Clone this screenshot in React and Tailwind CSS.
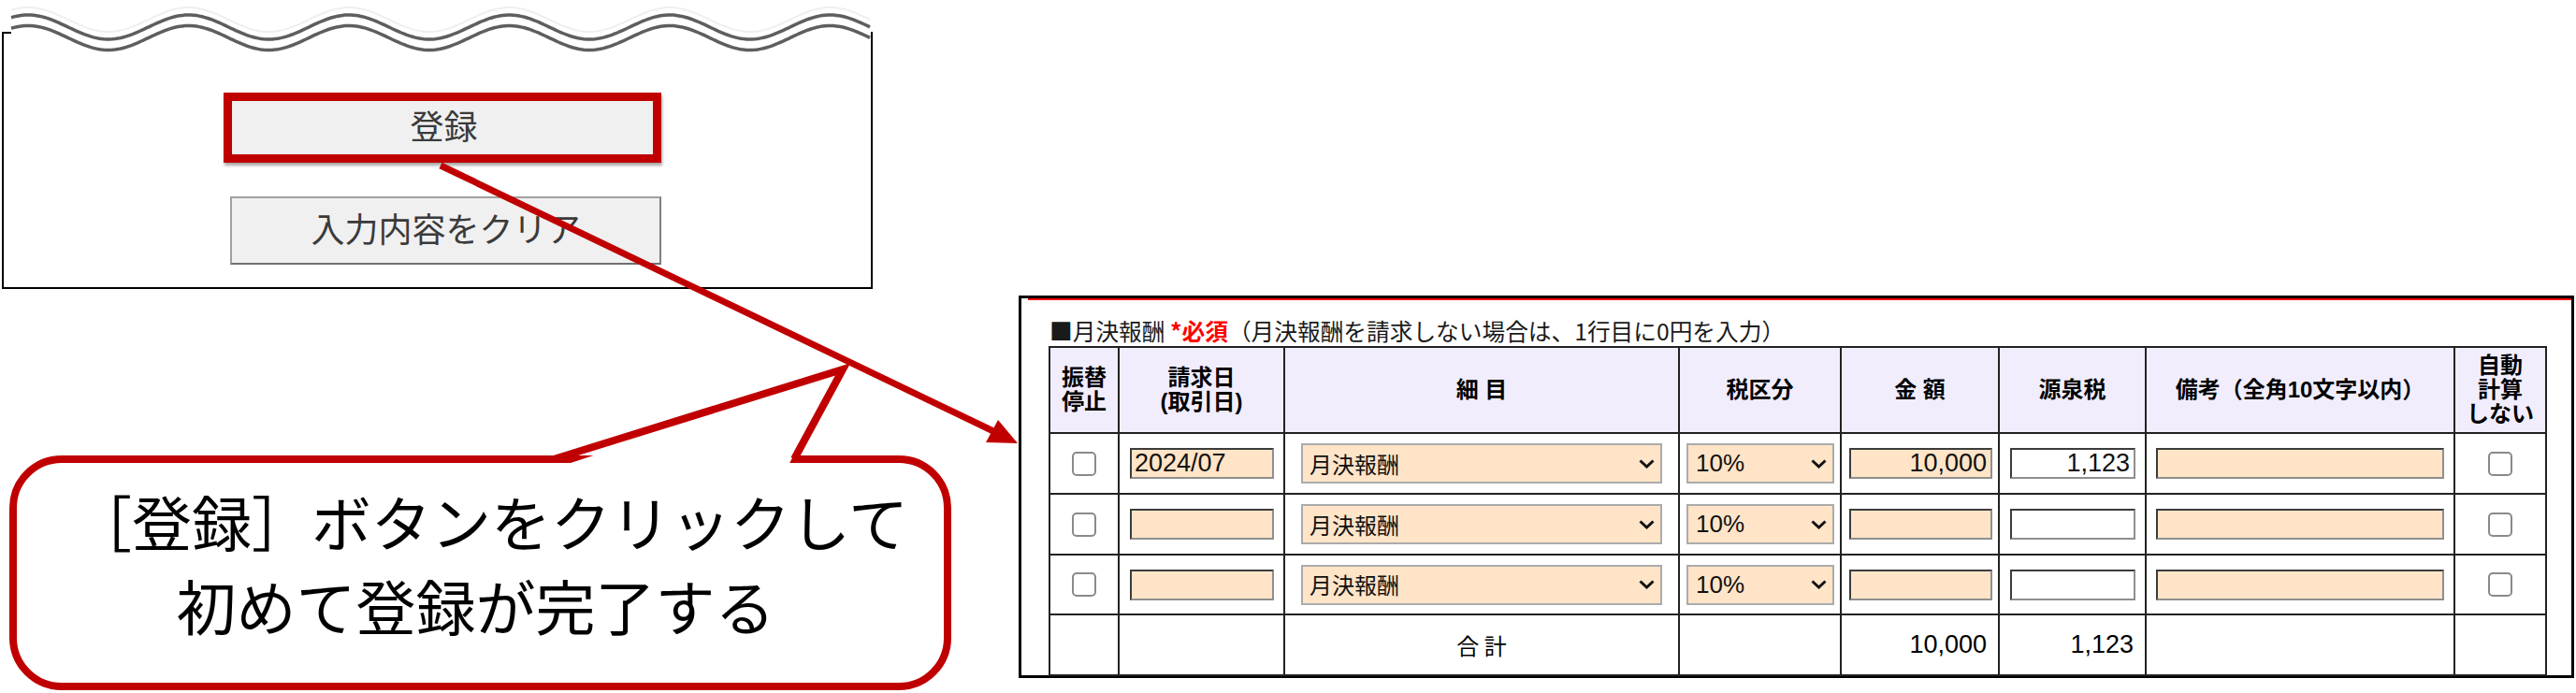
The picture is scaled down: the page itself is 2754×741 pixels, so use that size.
import React from 'react';

const rows = [
    { date: '2024/07', amount: '10,000', tax: '1,123' },
    { date: '', amount: '', tax: '' },
    { date: '', amount: '', tax: '' },
];

function wavePath(offset) {
    let d = '';
    for (let x = 12; x <= 930; x += 3) {
        const y = 29 + offset - 13 * Math.cos((2 * Math.PI * (x - 30)) / 171.5);
        d += (x === 12 ? 'M' : 'L') + x + ' ' + y.toFixed(1) + ' ';
    }
    return d;
}

function Chevron() {
    return (
        <svg width="17" height="10" viewBox="0 0 17 10" className="absolute right-[8px] top-1/2 -translate-y-1/2 pointer-events-none">
            <path d="M1.5 1.5 L8.5 8 L15.5 1.5" fill="none" stroke="#111" strokeWidth="3" />
        </svg>
    );
}

function Check() {
    return (
        <input
            type="checkbox"
            readOnly
            className="appearance-none block mx-auto w-[26px] h-[26px] rounded-[5px] border-2 border-[#8a8a8a] bg-white"
        />
    );
}

function Field({ value, peach = true, right = false, width }) {
    return (
        <input
            readOnly
            value={value}
            style={{ width }}
            className={
                'block h-[33px] border-2 border-t-[#3c3c3c] border-l-[#3c3c3c] border-r-[#8f8f8f] border-b-[#8f8f8f] text-[27px] leading-none text-[#111] outline-none ' +
                (peach ? 'bg-[#ffe4c8] ' : 'bg-white ') +
                (right ? 'text-right pr-[4px]' : 'text-left pl-[3px]')
            }
        />
    );
}

export default function App() {
    return (
        <div className="relative w-[2754px] h-[741px] overflow-hidden bg-white flex font-['Liberation_Sans','Noto_Sans_CJK_JP',sans-serif] text-black">
            {/* left: app screen fragment + callout */}
            <div className="w-[1089px] shrink-0 flex flex-col">
                <div className="mt-[34px] ml-[2px] w-[931px] h-[275px] border-2 border-black flex flex-col">
                    <div className="mt-[63px] ml-[235px] w-[468px] h-[75px] border-[9px] border-[#C00000] shadow-[1px_3px_3px_rgba(0,0,0,0.35)] bg-[#f0f0f0] flex items-center justify-center">
                        <span className="text-[36px] leading-none text-[#3a3a3a] pl-[3px]">登録</span>
                    </div>
                    <div className="mt-[36px] ml-[242px] w-[461px] h-[73px] border-2 border-[#a0a0a0] border-b-[#6f6f6f] border-r-[#7f7f7f] bg-[#f0f0f0] flex items-center justify-center">
                        <span className="text-[36px] leading-none text-[#3a3a3a]">入力内容をクリア</span>
                    </div>
                </div>

                <div className="mt-[178px] ml-[10px] w-[1007px] h-[251px] border-[8px] border-[#C00000] rounded-[56px] flex flex-col items-center justify-center pb-[24px] font-['Noto_Sans_CJK_JP',sans-serif]">
                    <div className="text-[64px] leading-[90px] pl-[21px] whitespace-nowrap">［登録］ボタンをクリックして</div>
                    <div className="text-[64px] leading-[90px] pr-[10px] whitespace-nowrap">初めて登録が完了する</div>
                </div>
            </div>

            {/* right: form panel */}
            <div className="mt-[316px] w-[1663px] h-[409px] shrink-0 border-[3px] border-black flex flex-col">
                <div className="ml-[7px] border-t-2 border-[#ff0000]" />
                <div className="mt-[17px] pl-[30px] text-[24.7px] leading-[30px] text-[#1a1a1a] font-['Noto_Sans_CJK_JP',sans-serif] whitespace-nowrap">
                    ■月決報酬 <span className="text-[#ff0000] font-bold">*必須</span>（月決報酬を請求しない場合は、1行目に0円を入力）
                </div>
                <table className="mt-[2px] ml-[29px] w-[1600px] border-collapse table-fixed">
                    <colgroup>
                        <col className="w-[74px]" />
                        <col className="w-[177px]" />
                        <col className="w-[422px]" />
                        <col className="w-[173px]" />
                        <col className="w-[169px]" />
                        <col className="w-[157px]" />
                        <col className="w-[330px]" />
                        <col className="w-[98px]" />
                    </colgroup>
                    <thead>
                        <tr className="h-[92px] bg-[#f1edfd] text-[24px] leading-[26px] font-bold">
                            <th className="border-2 border-[#222] p-0">振替<br />停止</th>
                            <th className="border-2 border-[#222] p-0">請求日<br />(取引日)</th>
                            <th className="border-2 border-[#222] p-0">細 目</th>
                            <th className="border-2 border-[#222] p-0">税区分</th>
                            <th className="border-2 border-[#222] p-0">金 額</th>
                            <th className="border-2 border-[#222] p-0">源泉税</th>
                            <th className="border-2 border-[#222] p-0">備考（全角10文字以内）</th>
                            <th className="border-2 border-[#222] p-0">自動<br />計算<br />しない</th>
                        </tr>
                    </thead>
                    <tbody>
                        {rows.map((r, i) => (
                            <tr key={i} className={i === 2 ? 'h-[64px]' : 'h-[65px]'}>
                                <td className="border-2 border-[#222] p-0"><Check /></td>
                                <td className="border-2 border-[#222] p-0 pl-[11px]"><Field value={r.date} width={154} /></td>
                                <td className="border-2 border-[#222] p-0 pl-[17px]">
                                    <div className="relative w-[386px] h-[43px]">
                                        <select
                                            defaultValue="月決報酬"
                                            className="appearance-none block w-full h-full bg-[#ffe4c8] border-2 border-[#ababab] pl-[7px] text-[24px] text-[#111] font-['Noto_Sans_CJK_JP',sans-serif] outline-none"
                                        >
                                            <option>月決報酬</option>
                                        </select>
                                        <Chevron />
                                    </div>
                                </td>
                                <td className="border-2 border-[#222] p-0 pl-[7px]">
                                    <div className="relative w-[158px] h-[43px]">
                                        <select
                                            defaultValue="10%"
                                            className="appearance-none block w-full h-full bg-[#ffe4c8] border-2 border-[#ababab] pl-[8px] text-[26px] text-[#111] outline-none"
                                        >
                                            <option>10%</option>
                                        </select>
                                        <Chevron />
                                    </div>
                                </td>
                                <td className="border-2 border-[#222] p-0 pl-[8px]"><Field value={r.amount} right width={153} /></td>
                                <td className="border-2 border-[#222] p-0 pl-[11px]"><Field value={r.tax} right peach={false} width={134} /></td>
                                <td className="border-2 border-[#222] p-0 pl-[10px]"><Field value="" width={308} /></td>
                                <td className="border-2 border-[#222] p-0"><Check /></td>
                            </tr>
                        ))}
                        <tr className="h-[65px]">
                            <td className="border-2 border-[#222] p-0" />
                            <td className="border-2 border-[#222] p-0" />
                            <td className="border-2 border-[#222] p-0 text-center text-[24px] font-['Noto_Sans_CJK_JP',sans-serif]">合 計</td>
                            <td className="border-2 border-[#222] p-0" />
                            <td className="border-2 border-[#222] p-0 text-right pr-[12px] text-[27px]">10,000</td>
                            <td className="border-2 border-[#222] p-0 text-right pr-[12px] text-[27px]">1,123</td>
                            <td className="border-2 border-[#222] p-0" />
                            <td className="border-2 border-[#222] p-0" />
                        </tr>
                    </tbody>
                </table>
            </div>

            {/* annotation overlay: torn edge, callout pointer, arrow */}
            <svg className="absolute inset-0 pointer-events-none" width="2754" height="741" viewBox="0 0 2754 741">
                <rect x="12" y="0" width="919" height="38" fill="#fff" />
                <path d={wavePath(-8)} fill="none" stroke="#efefef" strokeWidth="2" />
                <path d={wavePath(0)} fill="none" stroke="#5e5e5e" strokeWidth="3.5" />
                <path d={wavePath(11.5)} fill="none" stroke="#5e5e5e" strokeWidth="3.5" />

                <polygon points="604,497 897,401 843,497" fill="#fff" />
                <path d="M592 491 L901 395 L849 491" fill="none" stroke="#C00000" strokeWidth="8" strokeLinejoin="miter" />

                <line x1="471" y1="177" x2="1062" y2="461" stroke="#C00000" strokeWidth="7" />
                <polygon points="1088,474 1054,473 1067,449" fill="#C00000" />
            </svg>
        </div>
    );
}
